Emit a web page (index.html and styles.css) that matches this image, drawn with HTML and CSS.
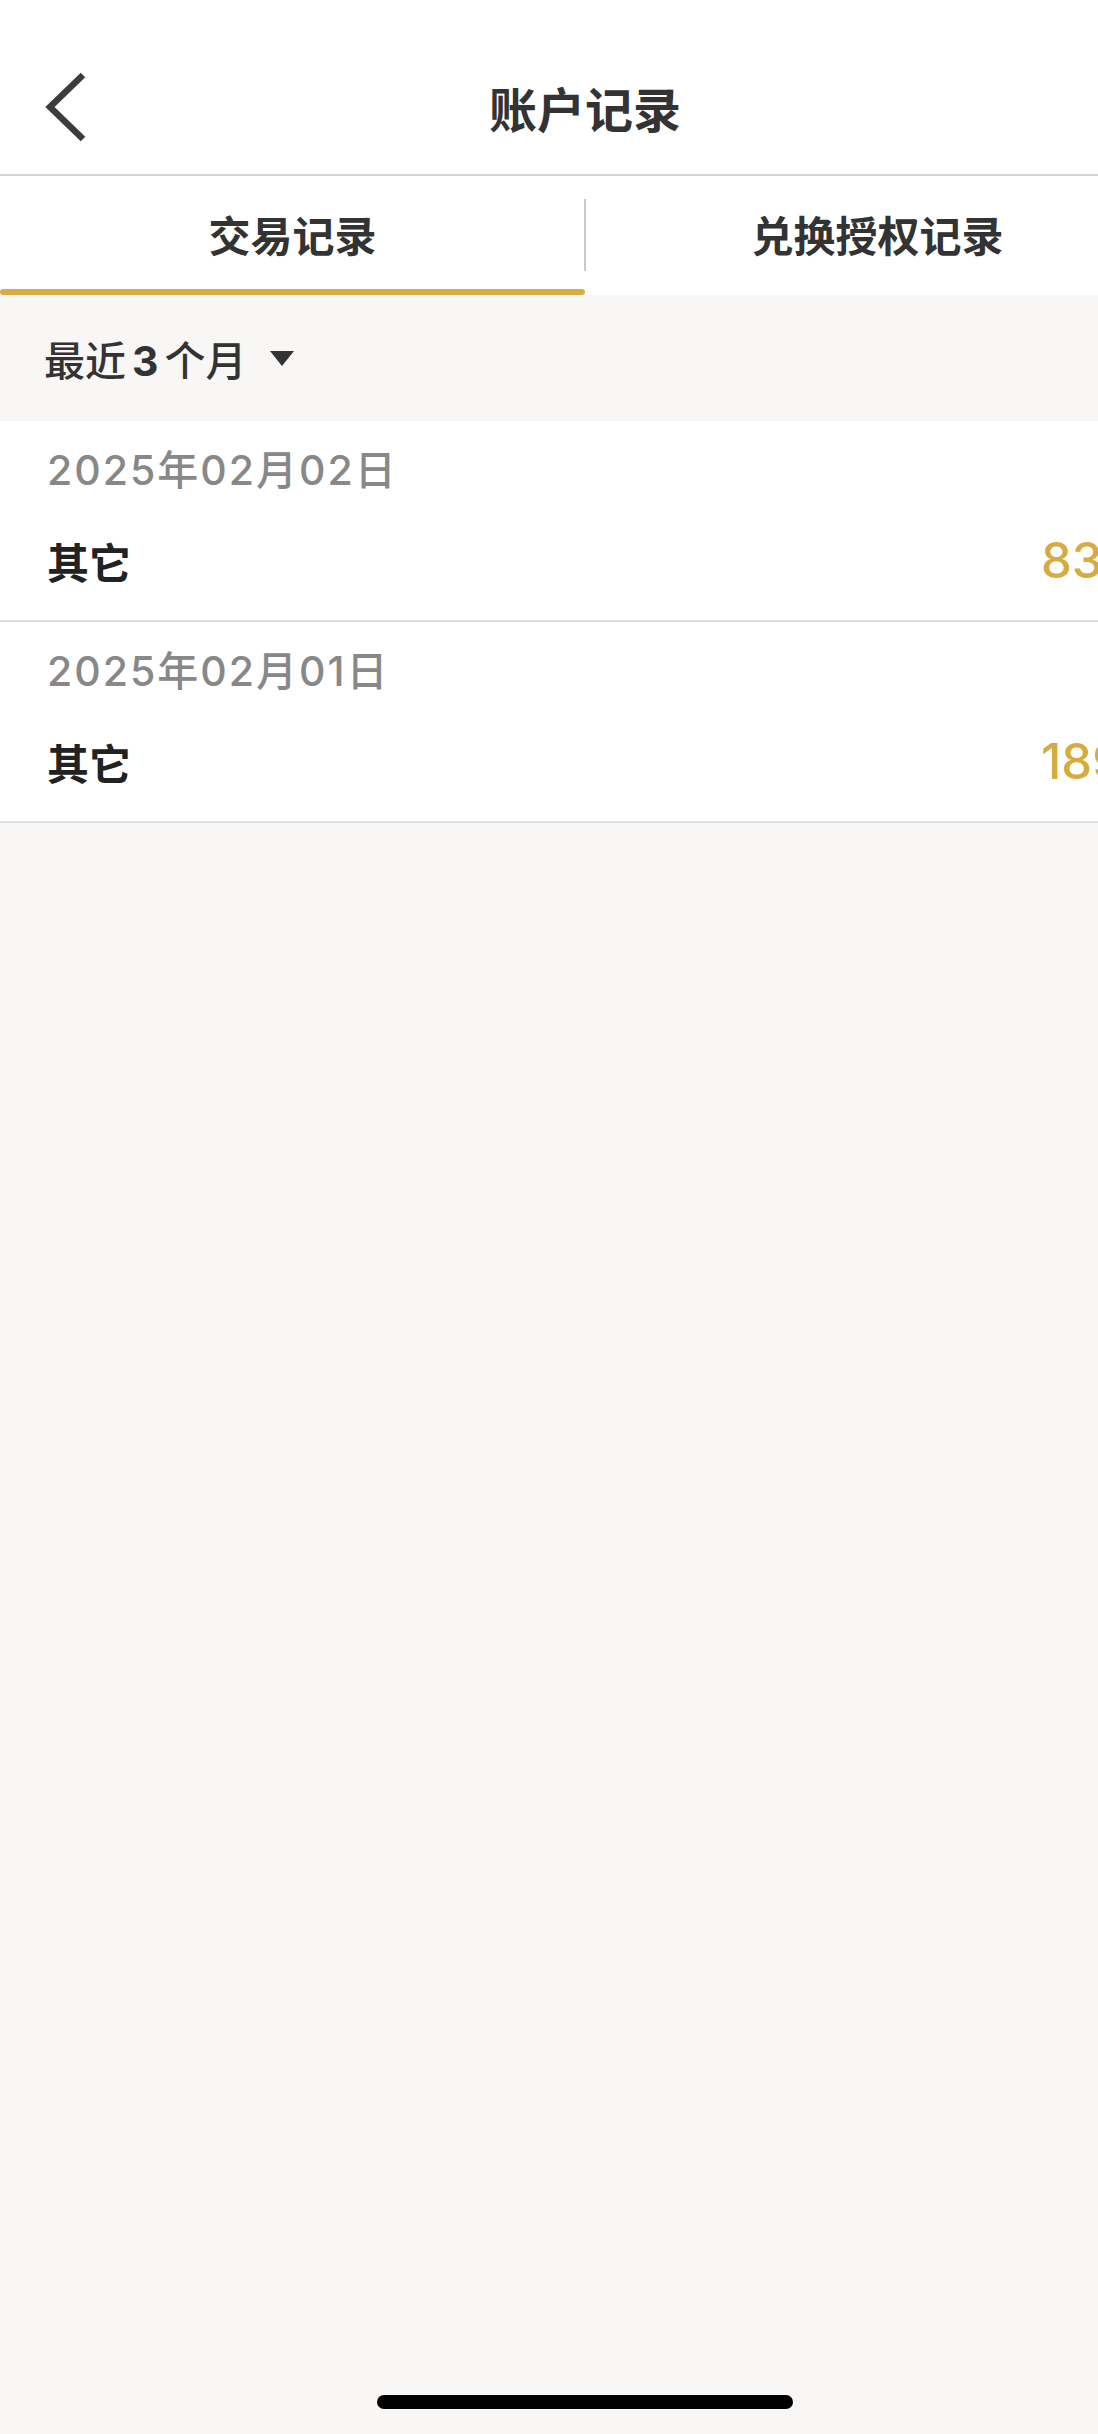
FILE: index.html
```html
<!DOCTYPE html>
<html lang="zh-CN">

<head>
	<meta charset="UTF-8" />
	<meta name="viewport" content="width=device-width, initial-scale=1.0" />
	<title>账户记录</title>
	<link rel="stylesheet" href="styles.css">
</head>

<body>

	<div class="app">
		<div class="top-bar">
			<div class="nav">
				<button class="back" aria-label="返回">
					<svg width="44" height="70" viewBox="0 0 44 70">
						<polyline points="38,3 5,35 38,67" fill="none" stroke="#3c3c3c" stroke-width="6.5" />
					</svg>
				</button>
				<h1>账户记录</h1>
				<div></div>
			</div>
		</div>

		<div class="tabs">
			<div class="tab active">交易记录</div>
			<div class="tab">兑换授权记录</div>
		</div>

		<div class="filter">
			<span>最近<b>3</b>个月</span>
			<span class="caret"></span>
		</div>

		<div class="records">
			<div class="record">
				<div class="record-date">2025年02月02日</div>
				<div class="record-line">
					<span class="record-type">其它</span>
					<span class="record-amount">83.00</span>
				</div>
			</div>
			<div class="record">
				<div class="record-date">2025年02月01日</div>
				<div class="record-line">
					<span class="record-type">其它</span>
					<span class="record-amount">189.00</span>
				</div>
			</div>
		</div>

		<div class="home-bar"></div>
	</div>

</body>

</html>
```

FILE: styles.css
```css
* {
	box-sizing: border-box;
	margin: 0;
	padding: 0;
}

body {
	font-family: Inter, 'Noto Sans CJK SC', sans-serif;
	background: #f8f7f5;
	overflow: hidden;
}

.app {
	width: 1170px;
	min-height: 2434px;
	display: flex;
	flex-direction: column;
	background: #f8f7f5;
}

.top-bar {
	background: white;
	padding-top: 39px;
	height: 176px;
	border-bottom: 2px solid #d3d3d3;
}

.nav {
	height: 135px;
	display: grid;
	grid-template-columns: 1fr auto 1fr;
	align-items: center;
}

.back {
	background: none;
	border: none;
	padding-left: 45px;
	display: flex;
	align-items: center;
	justify-self: start;
}

.nav h1 {
	font-size: 48px;
	font-weight: 600;
	color: #333;
}

.tabs {
	display: flex;
	background: white;
	height: 119px;
}

.tab {
	flex: 1;
	display: flex;
	align-items: center;
	justify-content: center;
	font-size: 42px;
	font-weight: 600;
	color: #333;
	padding-bottom: 4px;
	position: relative;
}

.tab + .tab::before {
	content: '';
	position: absolute;
	left: -1px;
	top: 23px;
	height: 72px;
	width: 2px;
	background: #cacaca;
}

.tab.active::after {
	content: '';
	position: absolute;
	left: 0;
	right: 0;
	bottom: 0;
	height: 6px;
	border-radius: 3px;
	background: #d6ad45;
}

.filter {
	height: 126px;
	padding-left: 44px;
	display: flex;
	align-items: center;
	gap: 24px;
	font-size: 41px;
	font-weight: 500;
	color: #333;
}

.filter b {
	font-weight: 700;
	margin: 0 6px;
}

.caret {
	width: 0;
	height: 0;
	border-left: 12px solid transparent;
	border-right: 12px solid transparent;
	border-top: 15px solid #333;
}

.records {
	background: white;
}

.record {
	height: 201px;
	padding: 24px 0 0 47px;
	border-bottom: 2px solid #e0e0e0;
}

.record-date {
	height: 50px;
	line-height: 50px;
	font-size: 41px;
	font-weight: 500;
	color: #888;
	letter-spacing: 2px;
}

.record-line {
	margin-top: 35px;
	height: 60px;
	display: flex;
	align-items: center;
	justify-content: space-between;
}

.record-type {
	font-size: 42px;
	font-weight: 700;
	color: #222;
}

.record-amount {
	width: 129px;
	font-size: 49px;
	font-weight: 500;
	color: #d6ab40;
}

.home-bar {
	margin: auto auto 25px;
	width: 416px;
	height: 14px;
	border-radius: 7px;
	background: black;
}
```
